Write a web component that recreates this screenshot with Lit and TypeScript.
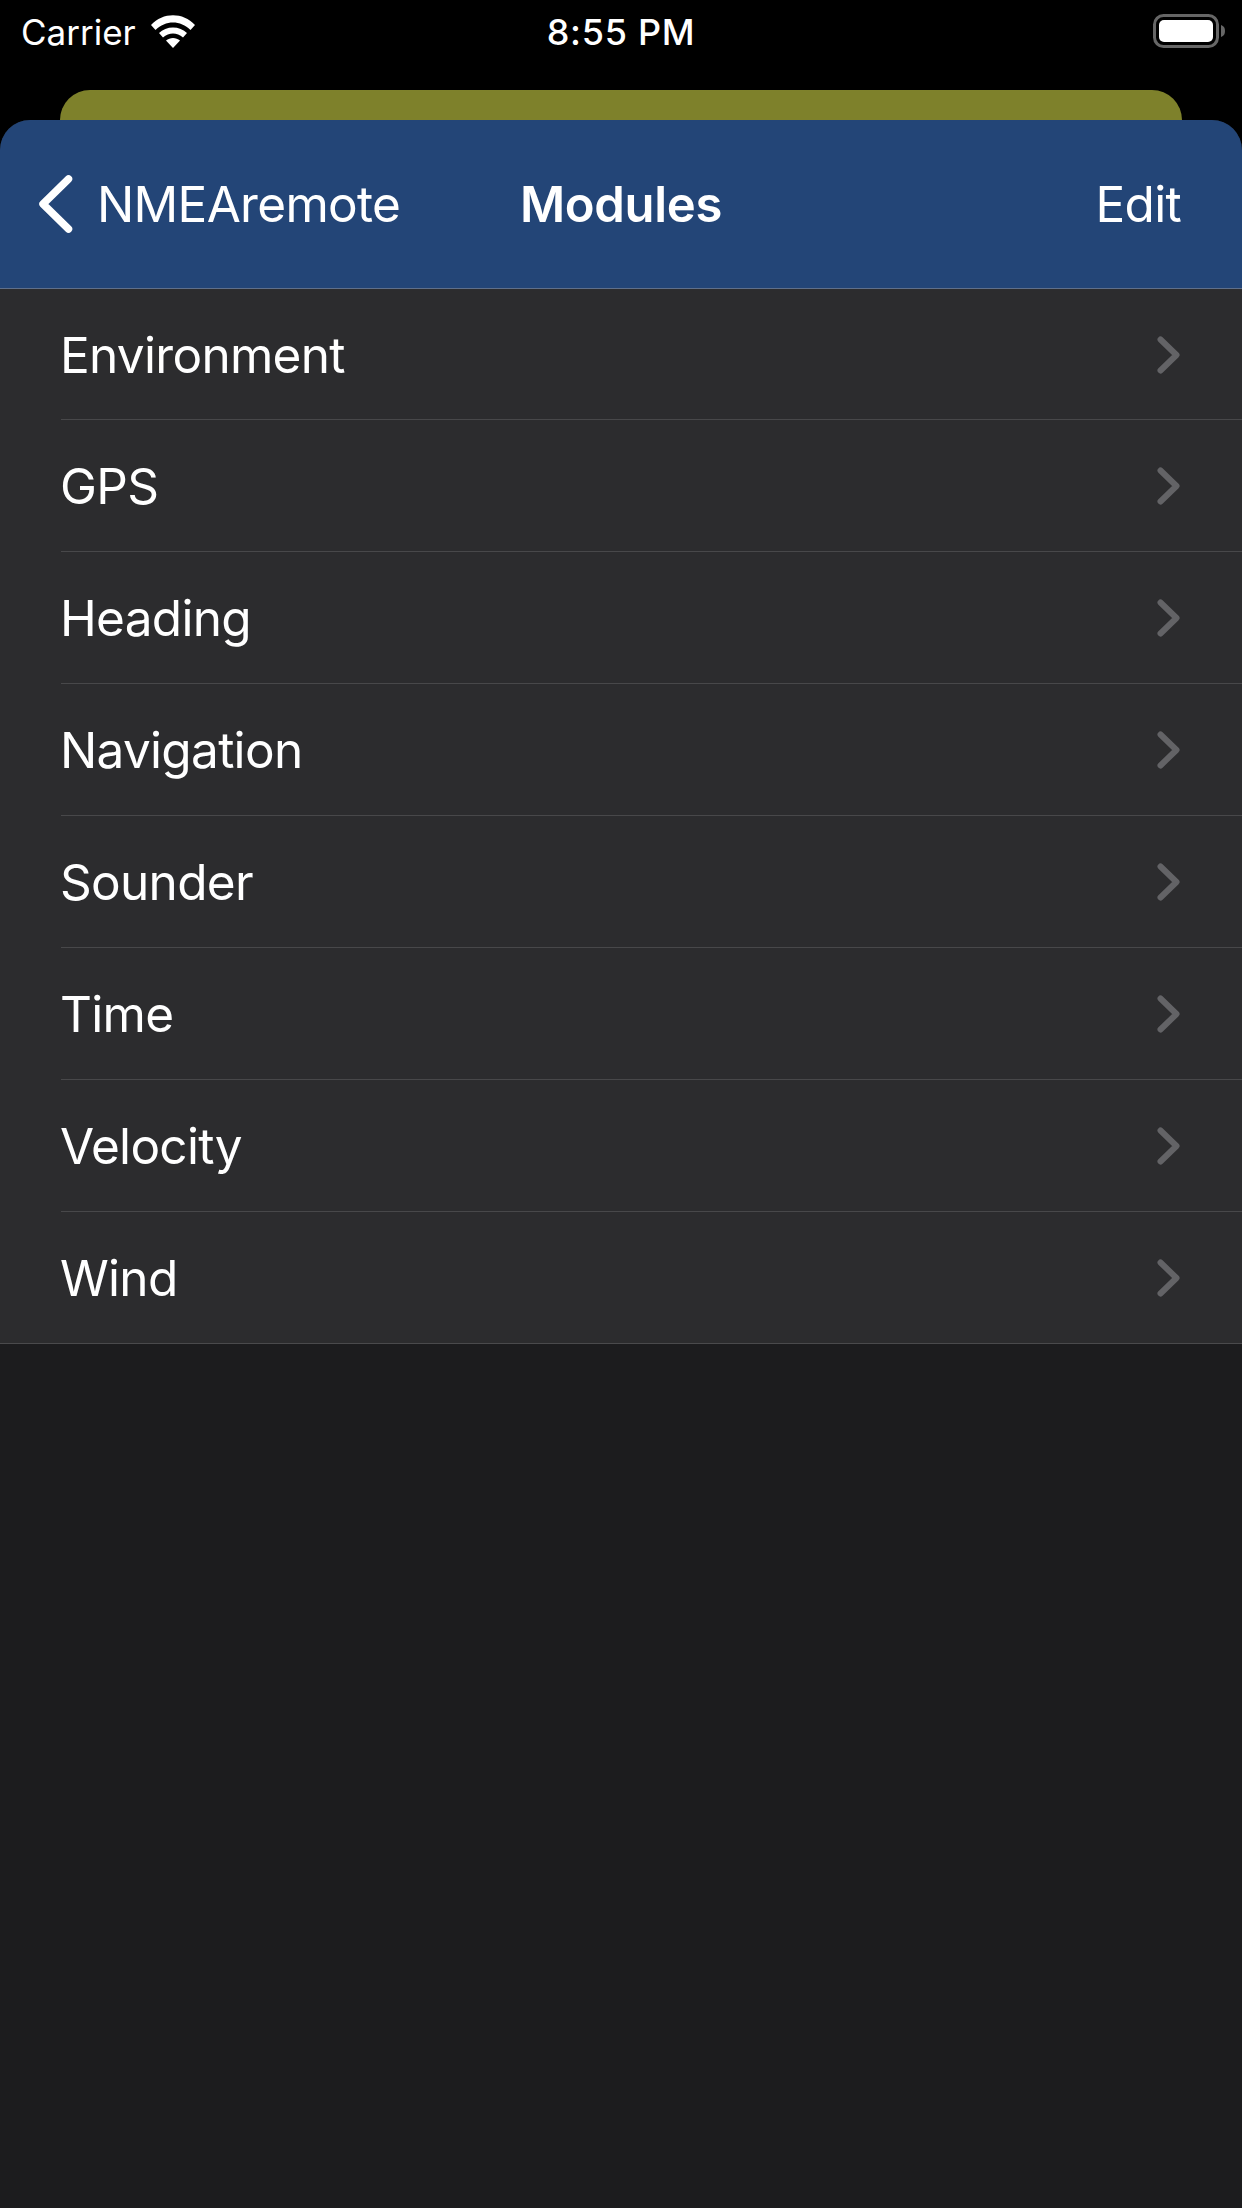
import { LitElement, html, css, svg } from "lit";
import { customElement } from "lit/decorators.js";

const ROWS = ["Environment", "GPS", "Heading", "Navigation", "Sounder", "Time", "Velocity", "Wind"];

@customElement("app-root")
export class AppRoot extends LitElement {
  static styles = css`
    :host {
      display: block;
      width: 1242px;
      height: 2208px;
      background: #000;
      color: #fff;
      font-family: Inter, "Liberation Sans", sans-serif;
      overflow: hidden;
    }
    .status {
      height: 60px;
      padding: 0 15px;
      display: grid;
      grid-template-columns: 1fr auto 1fr;
      align-items: center;
      font-size: 35px;
      line-height: 60px;
    }
    .status-left { display: flex; align-items: center; gap: 14px; padding-left: 6px; }
    .carrier { font-weight: 400; padding-top: 2px; }
    .time { font-weight: 500; font-size: 36px; letter-spacing: 0.7px; padding-top: 2px; }
    .status-right { display: flex; justify-content: flex-end; }
    .spacer { height: 30px; }
    .back-sheet {
      height: 30px;
      margin: 0 60px;
      background: #7e812b;
      border-radius: 30px 30px 0 0;
    }
    .sheet {
      height: 2088px;
      background: #1c1c1e;
      border-radius: 30px 30px 0 0;
      overflow: hidden;
    }
    .nav {
      height: 168px;
      box-sizing: content-box;
      border-bottom: 1px solid #5f6f8a;
      background: #234577;
      position: relative;
      display: flex;
      align-items: center;
      justify-content: space-between;
      padding: 0 61px 0 39px;
      font-size: 49.5px;
      font-weight: 400;
      letter-spacing: -0.7px;
    }
    .back { display: flex; align-items: center; gap: 22px; }
    .title {
      position: absolute;
      left: 0;
      right: 0;
      text-align: center;
      font-size: 49px;
      font-weight: 600;
      letter-spacing: -0.3px;
      pointer-events: none;
    }
    .list {
      background: #2c2c2e;
      border-bottom: 1px solid #4a4a4c;
    }
    .row {
      height: 132px;
      box-sizing: border-box;
      margin-left: 61px;
      padding-right: 61px;
      padding-top: 1px;
      display: flex;
      align-items: center;
      justify-content: space-between;
      font-size: 49.5px;
      font-weight: 400;
      letter-spacing: -0.7px;
      border-bottom: 1px solid #48484a;
    }
    .row span { margin-left: -1px; }
    .row:first-child { height: 131px; }
    .row:last-child { border-bottom: none; height: 131px; }
    svg { display: block; }
  `;

  render() {
    return html`
      <div class="status">
        <div class="status-left">
          <span class="carrier">Carrier</span>
          <svg width="46" height="34" viewBox="0 0 46 34">
            <path d="M1 11 C13 -2 33 -2 45 11 L40.5 16 C30.5 6 15.5 6 5.5 16 Z" fill="#fff"/>
            <path d="M9 19 C16 11.5 30 11.5 37 19 L33 23.5 C27 18 19 18 13 23.5 Z" fill="#fff"/>
            <path d="M16 26.5 C20 23 26 23 30 26.5 L23 34 Z" fill="#fff"/>
          </svg>
        </div>
        <div class="time">8:55 PM</div>
        <div class="status-right">
          <svg width="74" height="34" viewBox="0 0 74 34">
            ${svg`<rect x="1.5" y="1.5" width="63" height="31" rx="9" fill="none" stroke="#666" stroke-width="3"/>
            <rect x="6" y="6" width="54" height="22" rx="5" fill="#fff"/>
            <path d="M68 11 C71 12 72 14 72 17 C72 20 71 22 68 23 Z" fill="#666"/>`}
          </svg>
        </div>
      </div>
      <div class="spacer"></div>
      <div class="back-sheet"></div>
      <div class="sheet">
        <div class="nav">
          <div class="back">
            <svg width="36" height="58" viewBox="0 0 36 58">
              <path d="M29.5 4 L4 29 L29.5 54" fill="none" stroke="#fff" stroke-width="7.5" stroke-linecap="round" stroke-linejoin="round"/>
            </svg>
            <span>NMEAremote</span>
          </div>
          <div class="title">Modules</div>
          <div>Edit</div>
        </div>
        <div class="list">
          ${ROWS.map(
            (r) => html`<div class="row">
              <span>${r}</span>
              <svg width="24" height="38" viewBox="0 0 24 38">
                <path d="M3.5 3.5 L19.5 19 L3.5 34.5" fill="none" stroke="#636366" stroke-width="6" stroke-linecap="round" stroke-linejoin="round"/>
              </svg>
            </div>`
          )}
        </div>
      </div>
    `;
  }
}
